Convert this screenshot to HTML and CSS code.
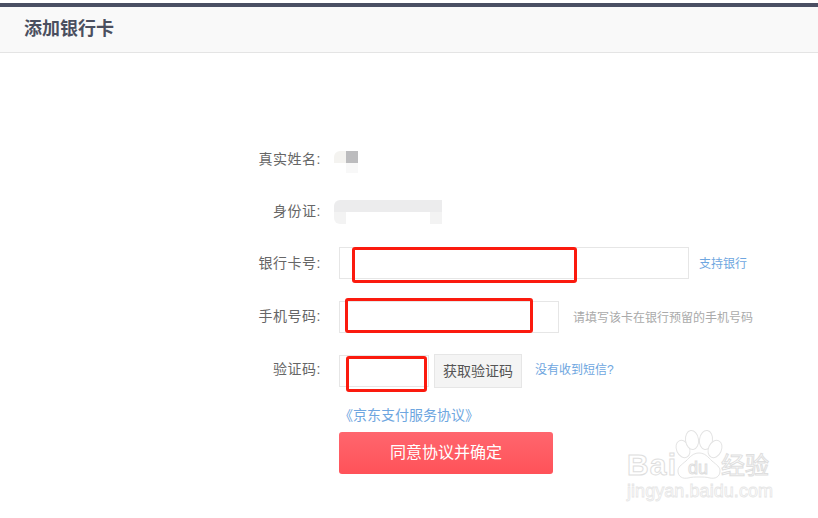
FILE: index.html
```html
<!DOCTYPE html>
<html lang="zh-CN">
<head>
<meta charset="UTF-8">
<title>添加银行卡</title>
<link rel="stylesheet" href="styles.css">
</head>
<body>

<div class="header">添加银行卡</div>

<div class="form">

<div class="row row-text">
<div class="label">真实姓名:</div>
<div class="blur-name"><i class="p1"></i><i class="p2"></i><i class="p3"></i></div>
</div>

<div class="row row-text">
<div class="label">身份证:</div>
<div class="blur-id"><i class="top"></i><i class="left"></i><i class="right"></i></div>
</div>

<div class="row">
<div class="label">银行卡号:</div>
<input class="input input-card" type="text">
<a class="link link-bank">支持银行</a>
</div>

<div class="row row-phone">
<div class="label">手机号码:</div>
<input class="input input-phone" type="text">
<span class="tip">请填写该卡在银行预留的手机号码</span>
</div>

<div class="row row-code">
<div class="label">验证码:</div>
<input class="input input-code" type="text">
<div class="btn-code">获取验证码</div>
<a class="link link-sms">没有收到短信?</a>
</div>

<div class="agree"><a class="link">《京东支付服务协议》</a></div>
<div class="btn-submit">同意协议并确定</div>

<div class="mark mark1"></div>
<div class="mark mark2"></div>
<div class="mark mark3"></div>

</div>

<svg class="watermark" width="208" height="98" viewBox="0 0 208 98">
<g fill="#fff" stroke="#e4e4e4" stroke-width="1">
<ellipse cx="73" cy="29" rx="6.5" ry="9" transform="rotate(-25 73 29)"/>
<ellipse cx="82" cy="20" rx="6.5" ry="9.5" transform="rotate(-8 82 20)"/>
<ellipse cx="96" cy="20" rx="6.5" ry="9.5" transform="rotate(8 96 20)"/>
<ellipse cx="105" cy="29" rx="6.5" ry="9" transform="rotate(25 105 29)"/>
<path d="M89 33c6 0 9 4 13 8 5 4 8 6 8 10 0 6-5 8-10 7-4-1-7-1-11-1s-7 0-11 1c-5 1-10-1-10-7 0-4 3-6 8-10 4-4 7-8 13-8z"/>
</g>
<g class="wm-text" fill="#fff" stroke="#dedede" stroke-width="1">
<text x="17" y="55" font-size="30" font-weight="bold" textLength="49">Bai</text>
<text x="78" y="54" font-size="18">du</text>
<text x="111" y="54" font-size="24">经验</text>
</g>
<text class="wm-text" x="17" y="77" font-size="18" fill="#fff" stroke="#e6e6e6" stroke-width="0.8" textLength="146">jingyan.baidu.com</text>
</svg>

</body>
</html>
```

FILE: styles.css
```css
*{
box-sizing:border-box;
}

html,body{
margin:0;
height:100%;
overflow:hidden;
}

body{
background:#fff;
font-family:"Liberation Sans","Noto Sans CJK SC",sans-serif;
font-size:14px;
color:#666;
padding-top:3px;
position:relative;
}

.header{
height:50px;
background:#f9f9f9;
border-top:4px solid #4a4f63;
border-bottom:1px solid #e4e4e4;
padding-left:24px;
font-size:18px;
line-height:44px;
font-weight:bold;
color:#4a4f5f;
}

.form{
position:relative;
padding:90px 0 0 240px;
}

.row{
display:flex;
align-items:center;
height:32px;
margin-bottom:22px;
}

.row-text{
margin-bottom:20px;
}

.row-code{
height:34px;
margin-top:-1px;
margin-bottom:0;
}

.label{
width:81px;
margin-right:18px;
padding-bottom:2px;
text-align:right;
letter-spacing:.5px;
flex:none;
}

.row-phone .label{
margin-top:-2px;
}

.row-code .label{
margin-top:-4px;
}

.input{
height:32px;
border:1px solid #e6e6e6;
background:#fff;
padding:0;
flex:none;
}

.input-card{width:350px}
.input-phone{width:220px}
.input-code{width:90px}

.link{
color:#6ea6e0;
font-size:12px;
}

.link-bank{margin-left:10px;margin-top:-2px}
.link-sms{margin-left:13px;margin-top:-5px}

.tip{
margin-left:14px;
margin-top:-2px;
font-size:12px;
color:#aaa;
}

.btn-code{
width:88px;
height:34px;
margin-left:5px;
background:#f4f4f4;
border:1px solid #e6e6e6;
font-size:14px;
line-height:32px;
text-align:center;
color:#555;
}

.agree{
margin:17px 0 0 99px;
height:20px;
line-height:20px;
}

.agree .link{
font-size:14px;
}

.btn-submit{
width:214px;
height:42px;
margin:7px 0 0 99px;
background:linear-gradient(#ff666e,#ff5259);
border-radius:3px;
color:#fff;
font-size:16px;
line-height:42px;
text-align:center;
}

/* blurred values */
.blur-name{
position:relative;
width:24px;
height:23px;
margin:7px 0 0 -5px;
}

.blur-name i,.blur-id i{
position:absolute;
display:block;
}

.blur-name .p1{left:0;top:0;width:12px;height:12px;background:#f4f3f0;border-radius:6px 0 0 0}
.blur-name .p2{left:12px;top:0;width:12px;height:12px;background:#bcbcbe}
.blur-name .p3{left:12px;top:12px;width:12px;height:10px;background:#f8f8f8}

.blur-id{
position:relative;
width:108px;
height:24px;
margin:2px 0 0 -5px;
}

.blur-id .top{left:0;top:0;width:108px;height:12px;background:#ececed;border-radius:6px 0 0 0}
.blur-id .left{left:0;top:12px;width:12px;height:12px;background:#f3f3f3;border-radius:0 0 0 6px}
.blur-id .right{left:96px;top:12px;width:12px;height:12px;background:#f3f3f3}

/* red marks drawn on top of the screenshot */
.mark{
position:absolute;
border:3px solid #fb1a0e;
border-radius:3px;
}

.mark1{left:352px;top:194px;width:225px;height:36px}
.mark2{left:345px;top:245px;width:188px;height:35px}
.mark3{left:346px;top:303px;width:81px;height:36px}

.watermark{
position:absolute;
left:610px;
top:420px;
}

.wm-text{
font-family:"Liberation Sans","Noto Sans CJK SC",sans-serif;
}
```
